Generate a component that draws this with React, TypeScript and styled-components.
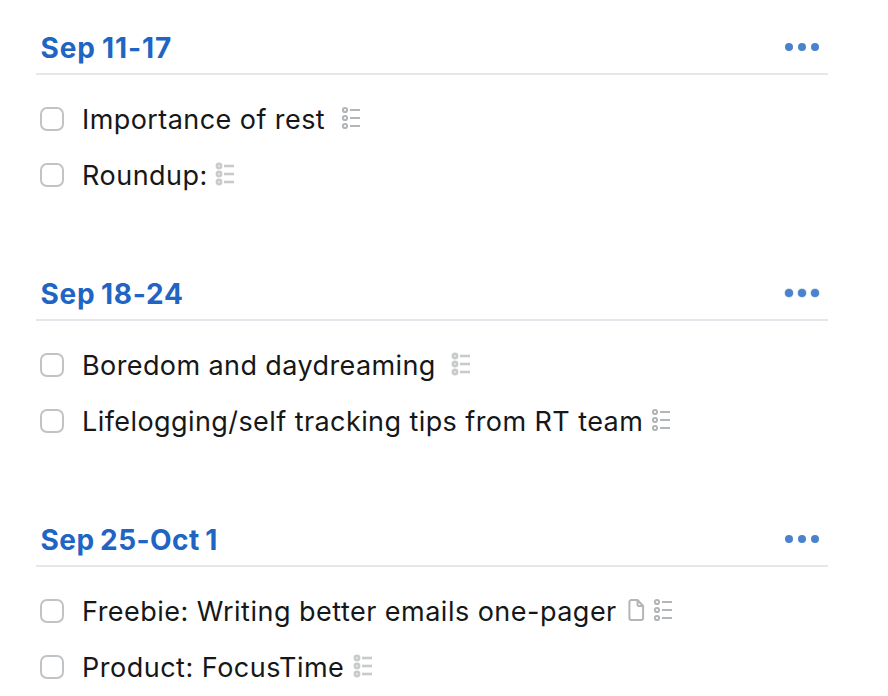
import React from 'react';
import styled, { createGlobalStyle } from 'styled-components';

const GlobalStyle = createGlobalStyle`
  * { box-sizing: border-box; }
  body { margin: 0; background: #fff; }
`;

const Page = styled.main`
  width: 888px;
  height: 696px;
  overflow: hidden;
  padding: 20px 60px 0 36px;
  font-family: Inter, sans-serif;
  color: #161718;
`;

const Section = styled.section`
  height: 246px;
`;

const Header = styled.header`
  display: flex;
  align-items: center;
  justify-content: space-between;
  height: 55px;
  padding: 0 8px 0 4px;
  border-bottom: 2px solid #e6e7ec;
`;

const Heading = styled.h2<{ $spacing: number }>`
  margin: 0;
  padding: 3px 0 0 0.5px;
  font-size: 28px;
  font-weight: 700;
  line-height: 52px;
  letter-spacing: ${(p) => p.$spacing}px;
  word-spacing: -1.5px;
  font-feature-settings: 'calt' 0;
  white-space: nowrap;
  color: #2065c3;
`;

const MoreButton = styled.button`
  display: flex;
  padding: 0;
  border: 0;
  background: none;
`;

const Dots = styled.svg<{ $soft?: boolean }>`
  display: block;
  overflow: visible;
  fill: #4a83cd;
  stroke: #4a83cd;
  stroke-opacity: ${(p) => (p.$soft ? 0.35 : 0)};
  stroke-width: 1.4;
`;

const List = styled.ul`
  list-style: none;
  margin: 0;
  padding: 16px 0 0 4px;
`;

const Row = styled.li`
  display: flex;
  align-items: center;
  height: 56px;
`;

const Checkbox = styled.span`
  width: 24px;
  height: 24px;
  flex: none;
  border: 2px solid #c1c4c7;
  border-radius: 7px;
`;

const Label = styled.span<{ $width: number; $spacing: number }>`
  width: ${(p) => p.$width}px;
  margin-left: 18px;
  padding-top: 2px;
  font-size: 27px;
  line-height: 54px;
  letter-spacing: ${(p) => p.$spacing}px;
  white-space: nowrap;
`;

const Icons = styled.span`
  display: flex;
  gap: 8px;
  height: 24px;
  margin-bottom: 2px;
`;

const Glyph = styled.svg<{ $soft?: boolean }>`
  display: block;
  overflow: visible;
  fill: none;
  stroke: ${(p) => (p.$soft ? '#c8cacc' : '#b3b6b9')};
  stroke-width: ${(p) => (p.$soft ? 2.6 : 2)};
`;

const More = ({ soft }: { soft?: boolean }) => (
  <MoreButton aria-label="More">
    <Dots width="36" height="10" $soft={soft}>
      <circle cx="5" cy="5" r="4" />
      <circle cx="18" cy="5" r="4" />
      <circle cx="31" cy="5" r="4" />
    </Dots>
  </MoreButton>
);

const ChecklistIcon = ({ soft }: { soft?: boolean }) => (
  <Glyph width="20" height="24" $soft={soft}>
    {[4, 12, 20].map((y) => (
      <g key={y}>
        <circle cx="3" cy={y} r="2.1" />
        <path d={`M8 ${y}h10`} />
      </g>
    ))}
  </Glyph>
);

const FileIcon = () => (
  <Glyph width="18" height="24" strokeLinejoin="round">
    <path d="M9.5 2H3.4A2 2 0 0 0 1.4 4V20A2 2 0 0 0 3.4 22H13.1A2 2 0 0 0 15.1 20V8ZM9.5 2V6.5A1.5 1.5 0 0 0 11 8H15.1" />
  </Glyph>
);

type Item = { text: string; width: number; spacing: number; soft?: boolean; file?: boolean };
type Group = { title: string; spacing: number; soft?: boolean; items: Item[] };

const groups: Group[] = [
  {
    title: 'Sep 11-17',
    spacing: 0.92,
    items: [
      { text: 'Importance of rest', width: 260, spacing: 0.43 },
      { text: 'Roundup:', width: 134, spacing: 0.5, soft: true },
    ],
  },
  {
    title: 'Sep 18-24',
    spacing: 0.7,
    soft: true,
    items: [
      { text: 'Boredom and daydreaming', width: 370, spacing: 0.4, soft: true },
      { text: 'Lifelogging/self tracking tips from RT team', width: 570, spacing: 0.42 },
    ],
  },
  {
    title: 'Sep 25-Oct 1',
    spacing: 0.45,
    items: [
      { text: 'Freebie: Writing better emails one-pager', width: 546, spacing: 0.48, file: true },
      { text: 'Product: FocusTime', width: 272, spacing: 0.5, soft: true },
    ],
  },
];

export default function App() {
  return (
    <Page>
      <GlobalStyle />
      {groups.map((group) => (
        <Section key={group.title}>
          <Header>
            <Heading $spacing={group.spacing}>{group.title}</Heading>
            <More soft={group.soft} />
          </Header>
          <List>
            {group.items.map((item) => (
              <Row key={item.text}>
                <Checkbox />
                <Label $width={item.width} $spacing={item.spacing}>{item.text}</Label>
                <Icons>
                  {item.file && <FileIcon />}
                  <ChecklistIcon soft={item.soft} />
                </Icons>
              </Row>
            ))}
          </List>
        </Section>
      ))}
    </Page>
  );
}
